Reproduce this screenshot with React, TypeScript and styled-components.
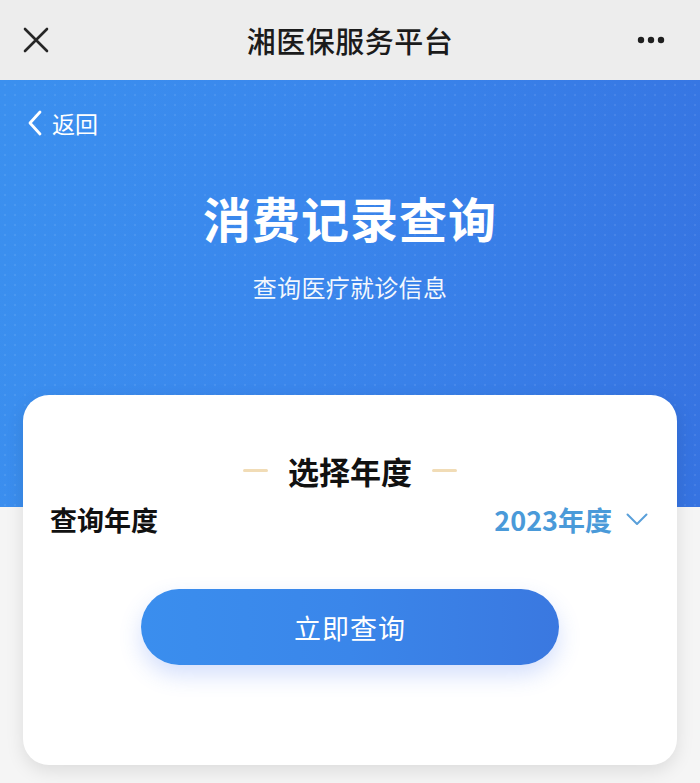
import React from "react";
import styled, { createGlobalStyle } from "styled-components";

const Global = createGlobalStyle`
  html, body { margin: 0; padding: 0; }
  body {
    background: #f5f5f5;
    font-family: "Noto Sans CJK SC", "Noto Sans", sans-serif;
  }
`;

const Page = styled.div`
  width: 700px;
  min-height: 783px;
  background: #f5f5f5;
  overflow: hidden;
`;

const NavBar = styled.header`
  height: 80px;
  background: #ededed;
  display: grid;
  grid-template-columns: 80px 1fr 80px;
  align-items: center;
`;

const NavIcon = styled.div<{ $align: "start" | "end" }>`
  display: flex;
  justify-content: ${(p) => (p.$align === "start" ? "flex-start" : "flex-end")};
  padding: ${(p) => (p.$align === "start" ? "0 0 0 23px" : "0 35px 0 0")};
  align-items: center;
`;

const NavTitle = styled.h1`
  margin: 0;
  text-align: center;
  font-size: 29px;
  font-weight: 500;
  color: #1b1b1b;
  letter-spacing: 0.5px;
`;

const Banner = styled.section`
  height: 427px;
  box-sizing: border-box;
  padding: 28px 27px 0;
  color: #fff;
  background-image:
    radial-gradient(circle, rgba(255, 255, 255, 0.08) 0.9px, transparent 1.3px),
    linear-gradient(100deg, #3b90ef 0%, #3a86ec 45%, #3673e1 100%);
  background-size: 10px 10px, 100% 100%;
`;

const BackRow = styled.div`
  display: flex;
  align-items: center;
  gap: 9px;
  height: 30px;
  font-size: 23px;
  line-height: 30px;
`;

const HeroTitle = styled.h2`
  margin: 49px 0 0;
  text-align: center;
  font-size: 48px;
  line-height: 60px;
  font-weight: 700;
  letter-spacing: 1px;
`;

const HeroSub = styled.p`
  margin: 25px 0 0;
  text-align: center;
  font-size: 24px;
  line-height: 30px;
  letter-spacing: 0.3px;
  color: rgba(255, 255, 255, 0.94);
`;

const Card = styled.section`
  margin: -112px 23px 0;
  height: 370px;
  box-sizing: border-box;
  background: #fff;
  border-radius: 26px;
  box-shadow: 0 6px 18px rgba(0, 0, 0, 0.1);
  padding-top: 55px;
  position: relative;
`;

const Heading = styled.div`
  display: flex;
  justify-content: center;
  align-items: center;
  gap: 20px;
  height: 40px;
  font-size: 31px;
  font-weight: 700;
  color: #111;
`;

const Dash = styled.span`
  width: 25px;
  height: 3px;
  border-radius: 2px;
  background: #f1dcb6;
`;

const YearRow = styled.div`
  margin-top: 11px;
  display: flex;
  justify-content: space-between;
  align-items: center;
  height: 36px;
  padding: 0 29px 0 27px;
`;

const RowLabel = styled.span`
  font-size: 27px;
  font-weight: 700;
  color: #111;
`;

const YearPick = styled.span`
  display: flex;
  align-items: center;
  gap: 14px;
  font-size: 27px;
  font-weight: 700;
  color: #4a9ad9;
`;

const ButtonWrap = styled.div`
  margin-top: 52px;
  display: flex;
  justify-content: center;
`;

const QueryButton = styled.button`
  width: 418px;
  height: 76px;
  border: none;
  border-radius: 38px;
  background: linear-gradient(90deg, #3a8eee 0%, #3a86ea 50%, #3a78e0 100%);
  color: #fff;
  font-family: inherit;
  font-size: 27px;
  letter-spacing: 1px;
  box-shadow: 0 10px 22px rgba(60, 110, 240, 0.22);
`;

const DotsIcon = () => (
  <svg width="28" height="8" viewBox="0 0 28 8">
    <circle cx="4" cy="4" r="3.2" fill="#1f1f1f" />
    <circle cx="14" cy="4" r="3.2" fill="#1f1f1f" />
    <circle cx="24" cy="4" r="3.2" fill="#1f1f1f" />
  </svg>
);

const CloseIcon = () => (
  <svg width="26" height="26" viewBox="0 0 26 26">
    <path d="M2 2 L24 24 M24 2 L2 24" stroke="#262626" strokeWidth="2.6" strokeLinecap="round" />
  </svg>
);

const BackIcon = () => (
  <svg width="16" height="26" viewBox="0 0 16 26">
    <path d="M13 2 L3 13 L13 24" fill="none" stroke="#fff" strokeWidth="2.8" strokeLinecap="round" strokeLinejoin="round" />
  </svg>
);

const ChevronDown = () => (
  <svg width="22" height="13" viewBox="0 0 22 13">
    <path d="M1.5 1.5 L11 11 L20.5 1.5" fill="none" stroke="#5aa0da" strokeWidth="2" strokeLinecap="round" strokeLinejoin="round" />
  </svg>
);

export default function App() {
  return (
    <Page>
      <Global />
      <NavBar>
        <NavIcon $align="start">
          <CloseIcon />
        </NavIcon>
        <NavTitle>湘医保服务平台</NavTitle>
        <NavIcon $align="end">
          <DotsIcon />
        </NavIcon>
      </NavBar>
      <Banner>
        <BackRow>
          <BackIcon />
          <span>返回</span>
        </BackRow>
        <HeroTitle>消费记录查询</HeroTitle>
        <HeroSub>查询医疗就诊信息</HeroSub>
      </Banner>
      <Card>
        <Heading>
          <Dash />
          <span>选择年度</span>
          <Dash />
        </Heading>
        <YearRow>
          <RowLabel>查询年度</RowLabel>
          <YearPick>
            <span>2023年度</span>
            <ChevronDown />
          </YearPick>
        </YearRow>
        <ButtonWrap>
          <QueryButton>立即查询</QueryButton>
        </ButtonWrap>
      </Card>
    </Page>
  );
}
